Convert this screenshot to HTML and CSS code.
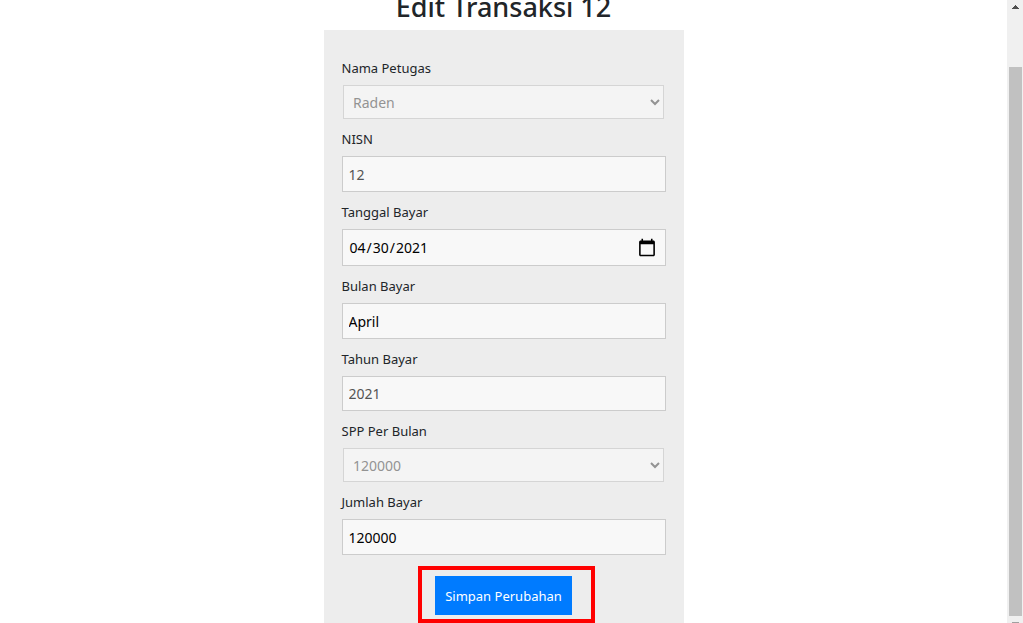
FILE: index.html
```html
<!DOCTYPE html>
<html lang="id">
<head>
<meta charset="utf-8">
<title>Edit Transaksi</title>
<link rel="stylesheet" href="styles.css">
</head>
<body>
<main class="page">
  <h2 class="title">Edit Transaksi 12</h2>
  <form class="card">
    <label class="label" for="petugas">Nama Petugas</label>
    <select class="control select" id="petugas" disabled><option>Raden</option></select>
    <label class="label" for="nisn">NISN</label>
    <input class="control" id="nisn" type="text" value="12" disabled>
    <label class="label" for="tanggal">Tanggal Bayar</label>
    <input class="control date" id="tanggal" type="date" value="2021-04-30">
    <label class="label" for="bulan">Bulan Bayar</label>
    <input class="control" id="bulan" type="text" value="April">
    <label class="label" for="tahun">Tahun Bayar</label>
    <input class="control number" id="tahun" type="text" value="2021" disabled>
    <label class="label" for="spp">SPP Per Bulan</label>
    <select class="control select" id="spp" disabled><option>120000</option></select>
    <label class="label" for="jumlah">Jumlah Bayar</label>
    <input class="control" id="jumlah" type="text" value="120000">
    <div class="actions">
      <button class="submit" type="button">Simpan Perubahan</button>
      <span class="highlight"></span>
    </div>
  </form>
</main>
<div class="scrollbar" aria-hidden="true">
  <svg class="arrow" width="16" height="16" viewBox="0 0 16 16" shape-rendering="crispEdges"><path fill="#505050" d="M8 5h1v1h1v1h1v1h1v1H5V8h1V7h1V6h1z"/></svg>
  <div class="thumb"></div>
  <svg class="arrow-end" width="16" height="7" viewBox="0 0 16 7" shape-rendering="crispEdges"><path fill="#a0a0a0" d="M5 6h7v1H5z"/></svg>
</div>
</body>
</html>
```
FILE: styles.css
```css
* {
  box-sizing: border-box;
}

body {
  display: flex;
  height: 100vh;
  margin: 0;
  overflow: hidden;
  background: #fff;
  color: #212529;
  font-family: "Noto Sans", "Open Sans", sans-serif;
  font-size: 13px;
}

.page {
  flex: 1;
  display: flex;
  flex-direction: column;
  align-items: center;
  overflow: hidden;
}

.title {
  flex: none;
  margin: -12px 0 4px;
  font-size: 27px;
  font-weight: 500;
  line-height: 38px;
}

.card {
  flex: none;
  display: flex;
  flex-direction: column;
  width: 360px;
  padding: 18px;
  background: #ededed;
}

.label {
  padding: 10px 0 7px;
  line-height: 20px;
}

.control {
  width: 100%;
  height: 36px;
  padding: 0 6px;
  border: 1px solid #ccc;
  border-radius: 0;
  background: #f8f8f8;
  color: #000;
  font: inherit;
  font-size: 14px;
}

.control:disabled {
  color: #545454;
}

.date {
  height: 37px;
  padding-right: 8px;
}

.date::-webkit-calendar-picker-indicator {
  width: 20px;
  height: 20px;
  padding: 0;
}

.number {
  height: 35px;
}

.select {
  align-self: center;
  width: 321px;
  height: 34px;
  padding: 0 6px 0 5px;
}

.select:disabled {
  color: #6d6d6d;
  opacity: 0.7;
}

.actions {
  position: relative;
  align-self: center;
  margin-top: 21px;
}

.submit {
  display: block;
  height: 39px;
  padding: 0 10px;
  border: 0;
  background: #007bff;
  color: #fff;
  font: inherit;
}

.highlight {
  position: absolute;
  inset: -10px -23px -8px -17px;
  border: 4px solid #f00;
  pointer-events: none;
}

.scrollbar {
  display: flex;
  flex-direction: column;
  width: 16px;
  background: #f0f0f0;
}

.arrow {
  margin-bottom: 51px;
}

.arrow,
.arrow-end {
  flex: none;
}

.thumb {
  flex: 1;
  margin: 0 1px 0 2px;
  background: #c1c1c1;
}
```
